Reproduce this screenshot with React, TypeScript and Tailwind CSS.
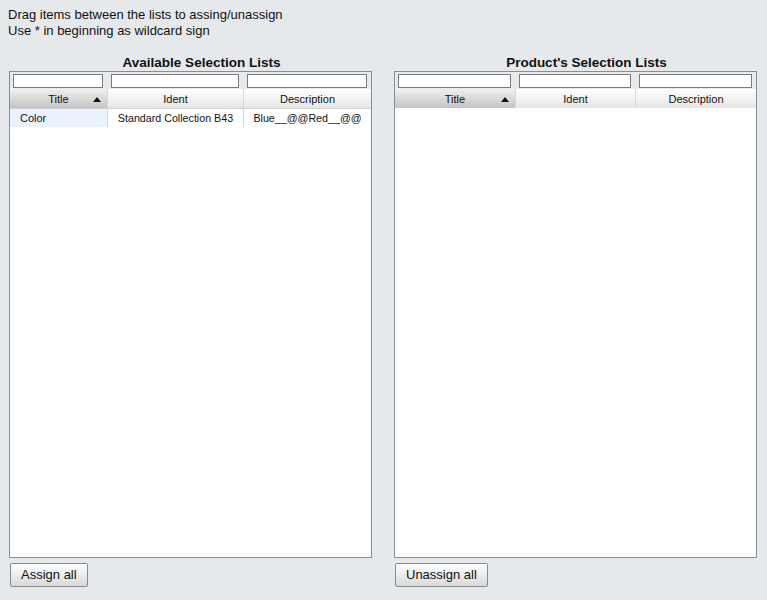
const font = { fontFamily: '"Liberation Sans", Arial, sans-serif' };

interface Column {
  label: string;
  width: number;
  sorted?: boolean;
}

interface Props {
  title: string;
  columns: Column[];
  rows: string[][];
  buttonLabel: string;
}

function SortArrow() {
  return (
    <svg width="8" height="5" viewBox="0 0 8 5" className="absolute right-[6px] top-[8px]">
      <path d="M0 5 L4 0 L8 5 Z" fill="#111" />
    </svg>
  );
}

function Panel({ title, columns, rows, buttonLabel }: Props) {
  return (
    <div className="w-[363px] flex flex-col">
      <div className="h-[16px] pl-[22px] text-center text-[13.5px] leading-[16px] font-bold text-[#111] whitespace-nowrap">
        {title}
      </div>
      <div className="h-[487px] border border-[#8c8c8c] bg-white flex flex-col">
        {/* filter row */}
        <div className="flex h-[17px] bg-[#e8eaed]">
          {columns.map((c, i) => (
            <div key={i} style={{ width: c.width }} className="px-[4px] pt-[2px] first:pl-[3px]">
              <div className="h-[14px] border border-[#7a7a7a] bg-white" />
            </div>
          ))}
        </div>
        {/* header row */}
        <div className="flex h-[19px]">
          {columns.map((c, i) => (
            <div
              key={i}
              style={{ width: c.width }}
              className={
                c.sorted
                  ? 'relative h-full text-center text-[11px] leading-[21px] text-[#111] bg-gradient-to-b from-[#f0f0f0] to-[#c4c4c4]'
                  : 'relative h-full text-center text-[11px] leading-[21px] text-[#111] bg-gradient-to-b from-white to-[#e6e6e6] border-l border-[#d8d8d8]'
              }
            >
              {c.label}
              {c.sorted && <SortArrow />}
            </div>
          ))}
        </div>
        {rows.map((r, ri) => (
          <div key={ri} className="flex h-[19px] border-t border-[#d0d0d0]">
            {r.map((v, ci) => (
              <div
                key={ci}
                style={{ width: columns[ci].width }}
                className={
                  ci === 0
                    ? 'h-full pl-[10px] text-[11px] leading-[18px] text-[#111] bg-[#eaf3fd] whitespace-nowrap overflow-hidden'
                    : 'h-full text-center text-[10.7px] leading-[18px] text-[#111] border-l border-[#d8d8d8] whitespace-nowrap overflow-hidden'
                }
              >
                {v}
              </div>
            ))}
          </div>
        ))}
      </div>
      <div className="pt-[4px] pl-[1px]">
        <button className="h-[24px] px-[10px] text-[13px] text-[#111] border border-[#8a8a8a] rounded-[2px] bg-gradient-to-b from-white to-[#d9d9d9]">
          {buttonLabel}
        </button>
      </div>
    </div>
  );
}

export default function App() {
  return (
    <div style={font} className="w-[767px] h-[600px] bg-[#e6e9ec] pl-[9px] pt-[7px]">
      <div className="text-[13px] leading-[16px] text-[#111] -ml-[1px]">
        <div>Drag items between the lists to assing/unassign</div>
        <div>Use * in beginning as wildcard sign</div>
      </div>
      <div className="flex gap-[22px] mt-[16px]">
        <Panel
          title="Available Selection Lists"
          columns={[
            { label: 'Title', width: 97, sorted: true },
            { label: 'Ident', width: 136 },
            { label: 'Description', width: 128 },
          ]}
          rows={[['Color', 'Standard Collection B43', 'Blue__@@Red__@@']]}
          buttonLabel="Assign all"
        />
        <Panel
          title="Product's Selection Lists"
          columns={[
            { label: 'Title', width: 120, sorted: true },
            { label: 'Ident', width: 120 },
            { label: 'Description', width: 121 },
          ]}
          rows={[]}
          buttonLabel="Unassign all"
        />
      </div>
    </div>
  );
}
